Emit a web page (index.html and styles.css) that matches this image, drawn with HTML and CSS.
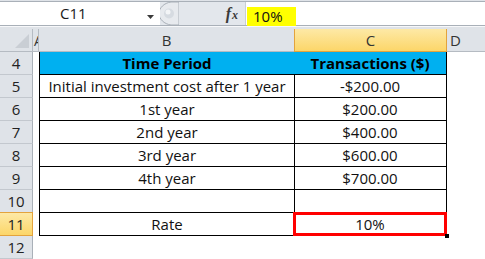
FILE: index.html
```html
<!DOCTYPE html>
<html>
<head>
<meta charset="utf-8">
<link rel="stylesheet" href="styles.css">
</head>
<body>
<div class="formula-strip">
  <div class="formula-bar">
    <div class="name-box">
      <span class="name-text">C11</span>
      <svg class="drop" width="7" height="4" viewBox="0 0 7 4"><path d="M0 0h7L3.5 4z" fill="#3a3a3a"/></svg>
    </div>
    <svg class="splitter" width="20" height="23" viewBox="0 0 20 23">
      <path d="M12 0C5 1 0 6 0 11.5S5 22 12 23H20V0z" fill="#e7eaee" stroke="#a9b0b8"/>
      <circle cx="10" cy="11.5" r="5" fill="#d6dbe1"/>
      <circle cx="9" cy="10" r="2.5" fill="#f3f5f7"/>
    </svg>
    <div class="fx"><i>f</i><span>x</span></div>
    <div class="formula-input"><span class="formula-value">10%</span></div>
  </div>
</div>
<div class="sheet">
  <div class="corner"><svg width="14" height="14" viewBox="0 0 14 14"><path d="M14 0V14H0z" fill="#c9ced4"/></svg></div>
  <div class="col-head col-a">A</div>
  <div class="col-head">B</div>
  <div class="col-head active">C</div>
  <div class="col-head col-d">D</div>

  <div class="row-head">4</div><div class="a-cell"></div>
  <div class="cell b title">Time Period</div><div class="cell c title">Transactions ($)</div><div class="d-cell"></div>

  <div class="row-head">5</div><div class="a-cell"></div>
  <div class="cell b">Initial investment cost after 1 year</div><div class="cell c">-$200.00</div><div class="d-cell"></div>

  <div class="row-head">6</div><div class="a-cell"></div>
  <div class="cell b">1st year</div><div class="cell c">$200.00</div><div class="d-cell"></div>

  <div class="row-head">7</div><div class="a-cell"></div>
  <div class="cell b">2nd year</div><div class="cell c">$400.00</div><div class="d-cell"></div>

  <div class="row-head">8</div><div class="a-cell"></div>
  <div class="cell b">3rd year</div><div class="cell c">$600.00</div><div class="d-cell"></div>

  <div class="row-head">9</div><div class="a-cell"></div>
  <div class="cell b">4th year</div><div class="cell c">$700.00</div><div class="d-cell"></div>

  <div class="row-head">10</div><div class="a-cell"></div>
  <div class="cell b"></div><div class="cell c"></div><div class="d-cell"></div>

  <div class="row-head active">11</div><div class="a-cell"></div>
  <div class="cell b">Rate</div><div class="cell c selected">10%</div><div class="d-cell"></div>

  <div class="row-head">12</div><div class="a-cell"></div>
  <div class="blank"></div><div class="blank"></div><div class="d-cell"></div>
</div>
</body>
</html>
```

FILE: styles.css
```css
html, body {
  margin: 0;
  padding: 0;
  background: #ffffff;
  width: 485px;
  height: 259px;
  overflow: hidden;
  font-family: "Open Sans", "Lato", "Liberation Sans", sans-serif;
}

/* formula bar */
.formula-strip {
  background: #dfe3e8;
  padding-top: 1px;
  height: 29px;
  box-sizing: border-box;
}
.formula-bar {
  display: flex;
  height: 25px;
  box-sizing: border-box;
  border-top: 1px solid #a9b0b8;
  border-bottom: 1px solid #a9b0b8;
  background: #e3e7ec;
  box-shadow: 0 1px 0 #f7f8fa;
}
.name-box {
  width: 160px;
  background: #ffffff;
  position: relative;
}
.name-text {
  position: absolute;
  left: 60px;
  top: 1px;
  font-size: 15px;
  line-height: 21px;
  color: #1a1a1a;
}
.drop {
  position: absolute;
  left: 147px;
  top: 13px;
}
.splitter {
  display: block;
  margin-left: -1px;
  margin-top: -0.5px;
}
.fx {
  width: 66px;
  display: flex;
  justify-content: flex-end;
  align-items: center;
  padding-right: 7px;
  box-sizing: border-box;
  font-family: "Liberation Serif", serif;
  font-style: italic;
  font-size: 16px;
  color: #3a3a3a;
}
.fx i { font-weight: bold; }
.fx span { font-size: 12px; font-weight: bold; margin-left: 1px; margin-top: 3px; }
.formula-input {
  flex: 1;
  background: #ffffff;
  border-left: 1px solid #c9ced4;
  padding: 3px 0 0 1px;
  box-sizing: border-box;
}
.formula-value {
  display: inline-block;
  width: 49px;
  height: 19px;
  background: #ffff00;
  font-size: 15px;
  line-height: 19px;
  padding-left: 6px;
  box-sizing: border-box;
  color: #111;
}

/* worksheet grid */
.sheet {
  display: grid;
  grid-template-columns: 33px 6px 256px 152px 38px;
  grid-template-rows: 23px repeat(9, 23px);
  font-size: 15px;
  color: #111;
}
.corner {
  background: #dfe3e8;
  border-right: 1px solid #b5bbc2;
  border-bottom: 1px solid #b5bbc2;
  display: flex;
  align-items: flex-end;
  justify-content: flex-end;
  padding: 0 3px 3px 0;
}
.corner svg { display: block; }
.col-head {
  background: #dfe3e8;
  border-right: 1px solid #b5bbc2;
  border-bottom: 1px solid #b5bbc2;
  display: flex;
  align-items: center;
  justify-content: center;
  color: #333;
  overflow: hidden;
}
.col-head.col-a {
  justify-content: flex-start;
  padding-left: 1px;
  font-size: 14px;
}
.col-head.col-d {
  justify-content: flex-start;
  padding-left: 3px;
  border-right: 0;
}
.col-head.active,
.row-head.active {
  background: linear-gradient(#fde9a6, #fcd669);
  border-color: #e3a33c;
}
.col-head.active {
  border-left: 1px solid #e3a33c;
  margin-left: -1px;
}
.row-head {
  background: #dfe3e8;
  border-right: 1px solid #a9b0b8;
  border-bottom: 1px solid #c3c8ce;
  display: flex;
  align-items: center;
  justify-content: center;
  color: #222;
}
.row-head.active {
  border-right: 1px solid #e3a33c;
  border-bottom: 1px solid #e3a33c;
  margin-top: -1px;
  border-top: 1px solid #e3a33c;
}
.a-cell, .d-cell, .blank { background: #ffffff; }

.cell {
  display: flex;
  align-items: center;
  justify-content: center;
  border-right: 1px solid #000;
  border-bottom: 1px solid #000;
  white-space: nowrap;
  color: #111;
}
.cell.b { border-left: 1px solid #000; }
.cell.c { margin-left: -1px; }
.cell.title {
  background: #00b0f0;
  font-weight: bold;
  color: #000;
}
.cell.selected { position: relative; }
.cell.selected::after {
  content: "";
  position: absolute;
  left: -1px;
  top: -1px;
  right: -1px;
  bottom: -1px;
  border: 3px solid #ff0000;
}
.cell.selected::before {
  content: "";
  position: absolute;
  right: -3px;
  bottom: -3px;
  width: 4px;
  height: 4px;
  background: #000;
  z-index: 1;
}
```
